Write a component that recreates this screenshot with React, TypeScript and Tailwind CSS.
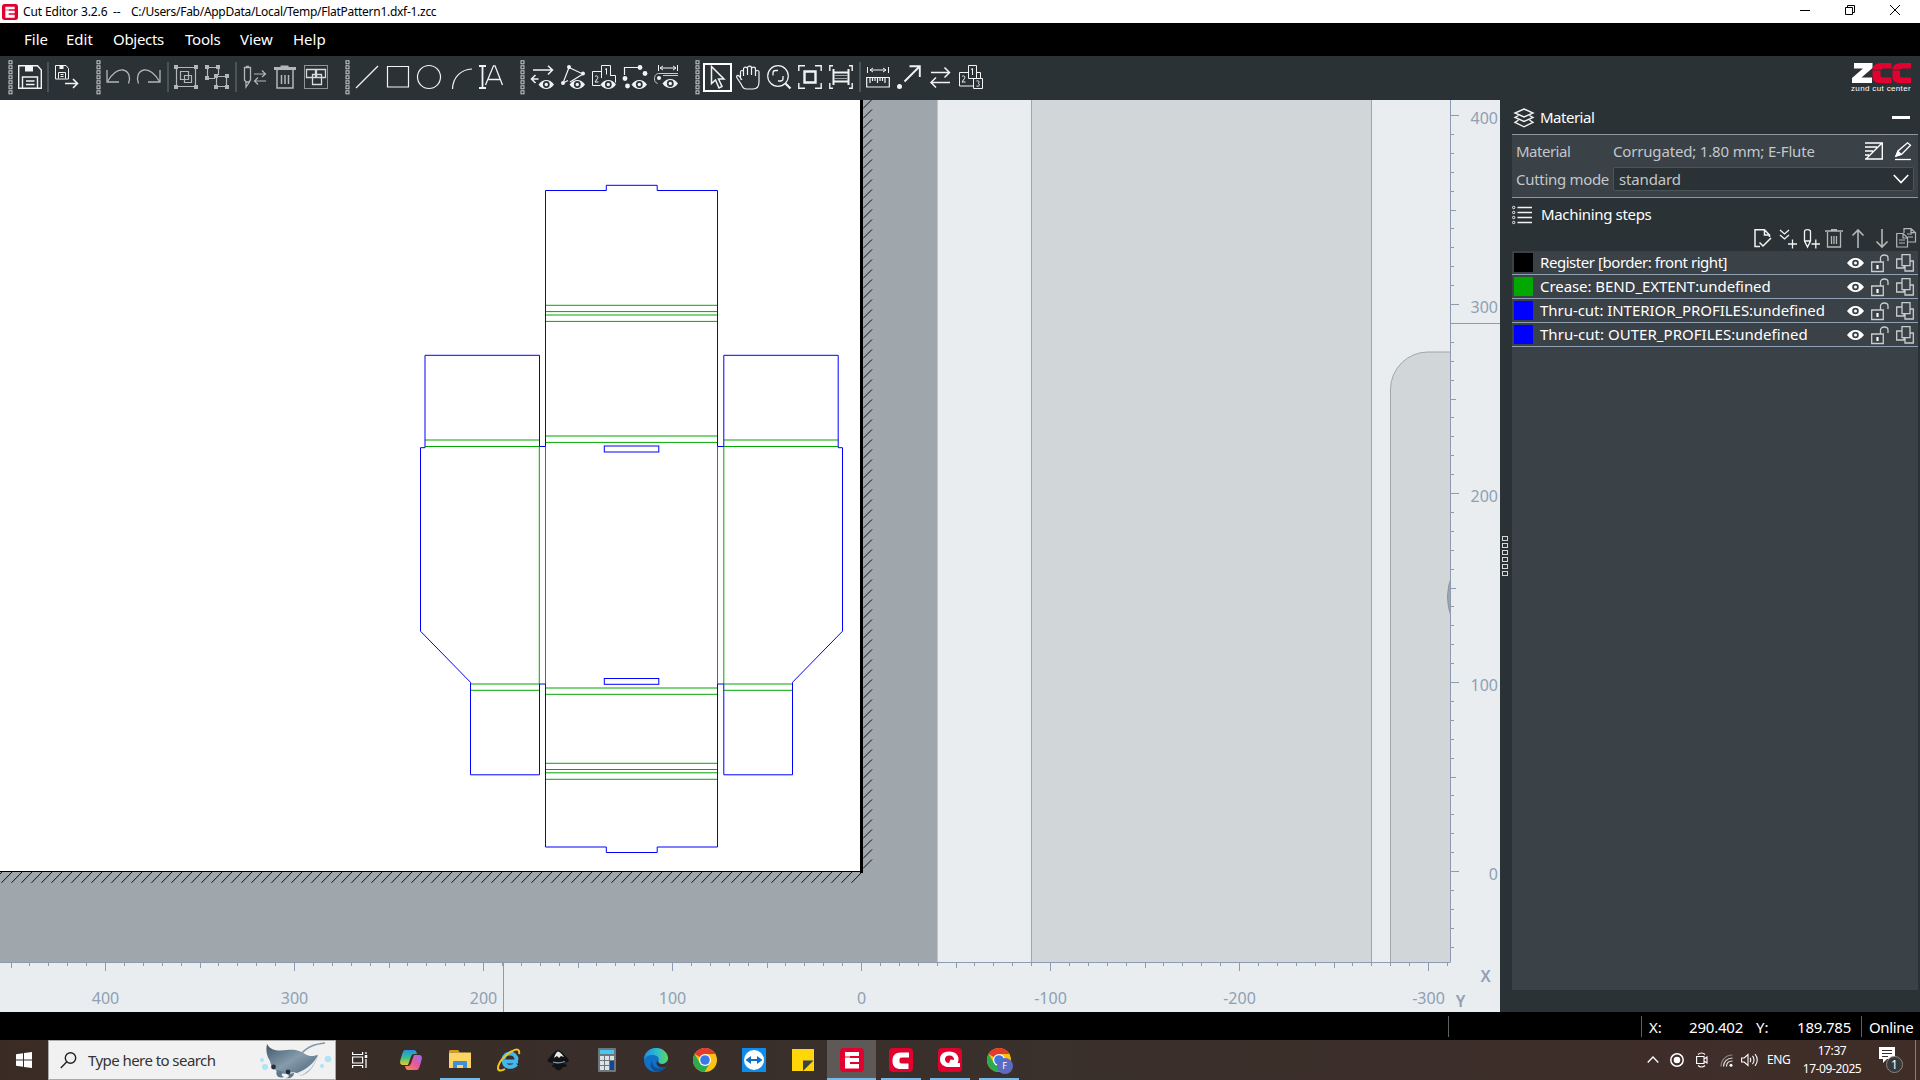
import type { ReactNode } from 'react'
import clsx from 'clsx'

const LIGHT = '#f2f4f4'
const DIM = '#b3b7b8'

type IconProps = {
  children: ReactNode
  size?: number
  color?: string
  sw?: number
}

function Icon({ children, size = 24, color = LIGHT, sw = 1 }: IconProps) {
  return (
    <svg
      width={size}
      height={size}
      viewBox={`0 0 ${size} ${size}`}
      fill="none"
      stroke={color}
      strokeWidth={sw}
      className="shrink-0 overflow-visible"
    >
      {children}
    </svg>
  )
}

function Tool({ children, active, dim, sw }: { children: ReactNode; active?: boolean; dim?: boolean; sw?: number }) {
  return (
    <button className="flex h-[29px] w-[31px] shrink-0 items-center justify-center">
      {active ? (
        <span className="flex h-[29px] w-[29px] items-center justify-center border-2 border-white">
          <Icon sw={sw}>{children}</Icon>
        </span>
      ) : (
        <Icon color={dim ? DIM : LIGHT} sw={sw}>{children}</Icon>
      )}
    </button>
  )
}

function Dots({ count }: { count: number }) {
  return (
    <svg width="5" height={count * 5} viewBox={`0 0 5 ${count * 5}`} fill="none" stroke="#c9cdce" className="shrink-0">
      {Array.from({ length: count }, (_, i) => (
        <rect key={i} x="1" y={i * 5 + 0.8} width="3" height="3" />
      ))}
    </svg>
  )
}

function Handle({ first, wide }: { first?: boolean; wide?: boolean }) {
  return (
    <span className={clsx('flex shrink-0 justify-end pr-[2px]', first ? 'w-[14.5px]' : wide ? 'w-[21px]' : 'w-[20px]')}>
      <Dots count={7} />
    </span>
  )
}

function Sep({ narrow }: { narrow?: boolean }) {
  return (
    <span className={clsx('flex shrink-0 justify-center', narrow ? 'w-[5px]' : 'w-[6px]')}>
      <span className="h-[30px] w-[2px] bg-[#4a5358]" />
    </span>
  )
}

// small eye shared by all the "show ..." buttons, 15x9
function Eye({ x, y }: { x: number; y: number }) {
  return (
    <g transform={`translate(${x} ${y})`} stroke="none">
      <path d="M0 4.5C2.5 1.2 5 0 7.8 0s5.300 1.200 7.700 4.500C13 8 10.500 9 7.800 9S2.500 8 0 4.500Z" fill={LIGHT} />
      <circle cx="7.8" cy="4.500" r="3.400" fill="#2b3235" />
      <circle cx="7.8" cy="4.500" r="1.700" fill={LIGHT} />
    </g>
  )
}

function Nodes({ pts, r = 2 }: { pts: number[][]; r?: number }) {
  return (
    <>
      {pts.map(([x, y]) => (
        <circle key={`${x}-${y}`} cx={x} cy={y} r={r} fill={LIGHT} stroke="none" />
      ))}
    </>
  )
}

function Corners({ pts }: { pts: number[][] }) {
  return (
    <>
      {pts.map(([x, y]) => (
        <rect key={`${x}-${y}`} x={x - 2} y={y - 2} width="4" height="4" fill={DIM} stroke="none" />
      ))}
    </>
  )
}

function TitleBar() {
  return (
    <header className="flex h-[23px] shrink-0 items-center bg-white pl-[2px] text-[12px] text-black">
      <AppLogo letter="E" size={16} />
      <span className="ml-[5px] w-[90px] whitespace-nowrap tracking-[-0.12px]">Cut Editor 3.2.6</span>
      <span className="w-[18px]">--</span>
      <span className="whitespace-nowrap tracking-[-0.28px]">C:/Users/Fab/AppData/Local/Temp/FlatPattern1.dxf-1.zcc</span>
      <div className="ml-auto flex items-center gap-[35px] pr-[20px] pb-[3px]">
        <svg width="10" height="10" stroke="#000"><path d="M0 5.500h10" /></svg>
        <svg width="10" height="10" stroke="#000" fill="none"><path d="M.5 2.500h7v7h-7zM2.500 2.500v-2h7v7h-2" /></svg>
        <svg width="10" height="10" stroke="#000"><path d="M0 0l10 10M10 0L0 10" /></svg>
      </div>
    </header>
  )
}

function MenuBar() {
  return (
    <nav className="flex h-[33px] shrink-0 items-center bg-black pl-[24px] text-[15px] text-white">
      <span className="w-[42px]">File</span>
      <span className="w-[47px]">Edit</span>
      <span className="w-[72px] tracking-[-0.3px]">Objects</span>
      <span className="w-[55px] tracking-[-0.2px]">Tools</span>
      <span className="w-[53px]">View</span>
      <span>Help</span>
    </nav>
  )
}

function ZccLogo() {
  return (
    <div className="flex w-[60px] flex-col items-center">
      <svg width="59" height="20" viewBox="0 0 59 20">
        <path d="M2 0h18.500v5L9.500 14.500H20V20H0v-5L11 5.500H2z" fill="#fff" />
        <path d="M39.500 0H29c-5 0-8.500 3-8.500 6v8c0 4 3 6 8 6h11v-5.500H31c-2 0-2.500-1-2.500-2V8c0-1.500 1-2.500 3-2.500h8zM59 0H49c-5 0-8.500 3-8.500 6v8c0 4 3 6 8 6H59v-5.500h-8.500c-2 0-2.500-1-2.500-2V8c0-1.500 1-2.500 3-2.500h8z" fill="#e4002f" />
        <path d="M20.500 7H39.500M40.500 7H59" stroke="#2b3235" strokeWidth="1" />
      </svg>
      <span className="mt-[1px] whitespace-nowrap font-['Liberation_Sans'] text-[8px] leading-[9px] tracking-[0.350px] text-white">zund cut center</span>
    </div>
  )
}

function Toolbar() {
  return (
    <div className="flex h-[44px] shrink-0 items-center bg-[#2b3235] pb-[2px]">
      <Handle first />
      <Tool>
        <path d="M.7.7H19.500l3.800 4.300V23.300H.7Z" strokeWidth="1.400" />
        <path d="M4.500 23V12h15v11" strokeWidth="1.400" />
        <path d="M8 16h8.500M8 19.500h8.500" strokeWidth="1.600" />
        <path d="M7 0h8v6.500H7z" fill={LIGHT} stroke="none" />
      </Tool>
      <Sep narrow />
      <Tool>
        <path d="M1.500.5h10.500l2.500 3v10.500h-13Z" />
        <path d="M4.500 13.500v-6h7v6M6.500 9.500h3M6.500 11.500h3" />
        <path d="M5.500 0h4v4h-4z" fill={LIGHT} stroke="none" />
        <path d="M11 18.500h12M19 14l4.500 4.500L19 23" strokeWidth="1.600" />
      </Tool>
      <Handle wide />
      <Tool dim>
        <path d="M1 5v12h12" strokeWidth="1.300" />
        <path d="M1.500 16.500C6 9 12 4.500 17 5c6 1 8 8 5.500 13.500" strokeWidth="1.300" />
      </Tool>
      <Tool dim>
        <path d="M23 5v12H11" strokeWidth="1.300" />
        <path d="M22.500 16.500C18 9 12 4.500 7 5 1 6-1 13 1.500 18.500" strokeWidth="1.300" />
      </Tool>
      <Sep />
      <Tool dim>
        <path d="M2.500 2.500h19v19h-19zM6.500 6.500h8v8h-8zM10.500 10.500h7v7h-7z" strokeWidth="1.200" />
        <Corners pts={[[2, 2], [22, 2], [2, 22], [22, 22]]} />
      </Tool>
      <Tool dim>
        <path d="M10 13.500H2.500v-11h11V10M11.500 11.500h10v10h-10z" strokeWidth="1.200" />
        <Corners pts={[[2, 2], [13, 2], [2, 13], [11, 11], [22, 11], [11, 22], [22, 22]]} />
      </Tool>
      <Sep />
      <Tool dim>
        <path d="M2.500 2.500h6v12.500l-1.500 2h-3l-1.500-2zM4 1.500h3M4 17v5l3.500-5" strokeWidth="1.300" />
        <path d="M12 9h11M20 5.500L23.500 9 20 12M24 16H13M16 12.500L12.500 16l3.500 3.500" strokeWidth="1.200" />
      </Tool>
      <Tool dim>
        <path d="M1 2h6.500V.5h8V2H23v3H1z" fill={DIM} stroke="none" />
        <path d="M4 5v18h16V5" strokeWidth="1.500" />
        <path d="M8.500 10v9M12 10v9M15.500 10v9" strokeWidth="1.500" />
      </Tool>
      <Tool>
        <rect x=".5" y=".5" width="23" height="23" strokeDasharray="1 1" />
        <path d="M2.500 4.500h9v8h-9zM12.500 4.500h9v8h-9zM8.500 9.500h9v10h-9z" stroke="#d8dbdb" strokeWidth="1.300" />
      </Tool>
      <Handle />
      <Tool>
        <path d="M1 23L23 1" strokeWidth="1.200" />
      </Tool>
      <Tool>
        <path d="M1.500 1.500h21v20.500h-21z" strokeWidth="1.200" />
      </Tool>
      <Tool>
        <circle cx="12" cy="12" r="11.500" strokeWidth="1.200" />
      </Tool>
      <Tool>
        <path d="M4.500 24C5 12 13 4.500 24 4" strokeWidth="1.200" />
      </Tool>
      <Tool>
        <path d="M0 1h7M0 23h7M3.500 1v22" strokeWidth="1.800" />
        <path d="M6.500 20L14.500.8h1.500L23.500 20M9.500 14.500h12" strokeWidth="1.300" />
      </Tool>
      <Handle />
      <Tool>
        <path d="M3 5h19M18 .8L22.500 5 18 9.500M8.500 14H2M5.500 10L1.500 14l4 4" strokeWidth="1.500" />
        <Eye x={8.500} y={15} />
      </Tool>
      <Tool>
        <path d="M8 2.500L22 9 9 17M8 2.500L2 18l5-2.500" strokeWidth="1.200" />
        <Nodes pts={[[8, 2], [22, 8.500], [2, 18]]} />
        <Eye x={8.500} y={15} />
      </Tool>
      <Tool>
        <path d="M9.500 13V.5h9V11M9 6.500H.5v14h8M19 10.500h4.500v7M14.500 9.500V3.500L13 4.500" />
        <path d="M3 11.500c2-1.500 3.500 0 2.500 2L3 17h3.500" />
        <Eye x={8.500} y={15} />
      </Tool>
      <Tool>
        <path d="M1.500 10V2.500H15" strokeWidth="1.200" />
        <Nodes pts={[[17, 2.500], [22, 8.500], [2, 13.500], [4.500, 21]]} r={2.400} />
        <Eye x={8.500} y={15} />
      </Tool>
      <Tool>
        <path d="M4.500 0v6M23.500 0v6M6 3h16M9 1L6 3l3 2M19 1l3 2-3 2" />
        <path d="M24 8.500H4.500C1 9 .5 12 .5 14c0 2 1 4 3 4.500M24 10.500H9" stroke="#c9cdce" />
        <Nodes pts={[[5, 13]]} />
        <Eye x={8.500} y={14} />
      </Tool>
      <Handle />
      <Tool active>
        <path d="M6.500 1.500v17l4-3.500 3.500 8 3-1.500-3.500-7.500H19z" strokeWidth="1.500" />
      </Tool>
      <Tool>
        <path d="M4.500 14.500V7c0-2 3-2 3 0v4V4c0-2.500 4-2.500 4 0v6-7c0-2.500 4-2.500 4 0v7-6c0-2.500 4-2.500 4 0v7-4c0-2 3.500-2 3.500 0v10c0 5-2 7-6 7H11c-3.500 0-4-1-6-5L.8 12.500c-.8-2 1.200-2.500 2.200-1.500l3 4" strokeWidth="1.200" />
      </Tool>
      <Tool>
        <circle cx="11" cy="11" r="10.300" strokeWidth="1.200" />
        <path d="M18.500 18.500l5 5" strokeWidth="2.200" />
        <path d="M6 10.500V8c0-1.500 1-2.500 2.500-2.500H11M16 11v2.500c0 1.500-1 2.500-2.500 2.500H11" strokeWidth="1.300" />
      </Tool>
      <Tool>
        <path d="M.8 6V.8H7M17 .8h6.200V6M.8 18v5.200H7M17 23.200h6.200V18" strokeWidth="1.400" />
        <path d="M6.500 6.500h11v11h-11z" strokeWidth="2.400" />
      </Tool>
      <Tool>
        <path d="M.8 6V.8H4M20 .8h3.200V6M.8 18v5.200H4M20 23.200h3.200V18" strokeWidth="1.400" />
        <path d="M4.500 4v16M19.500 4v16M4 7.500h16M4 16.500h16" strokeWidth="2" />
        <path d="M5 10.500h14M5 13.500h14" stroke="#9da2a4" />
      </Tool>
      <Sep />
      <Tool>
        <path d="M1.500 2v6M22.500 2v6M4 5h16M7 3L4 5l3 2M17 3l3 2-3 2" />
        <path d="M.7 12.500h22.600v9.500H.7zM4 13v5M6.500 13v3M9 13v3M11.500 13v5M14 13v3M16.500 13v3M19 13v5" strokeWidth="1.200" />
      </Tool>
      <Tool>
        <path d="M7.500 16.500L22.500 1.500M12.500 1.200h10.300V12" strokeWidth="1.900" />
        <Nodes pts={[[2.500, 21.500]]} r={2.500} />
      </Tool>
      <Tool>
        <path d="M3 7.500h18.500M16.500 2.500l5 5-5 5M22 17.500H3M8 12.500l-5 5 5 5" strokeWidth="1.500" />
      </Tool>
      <Tool>
        <path d="M9 7.500H.5v13.500h13.500M9.500 .5h8v13h-8zM18 7.500h3.500v6M14.500 13.500h9v10h-9z" />
        <path d="M12 4.500l1.500-1V10" />
        <path d="M3 11.500c2-1.500 3.500 0 2.500 2L3 17h3.500M17.500 16c2.500-1 3.500 1.500 1.500 2.500 2.500.5 1.500 3.500-1.500 2.500" />
      </Tool>
      <div className="mr-[9px] ml-auto pt-[2px]">
        <ZccLogo />
      </div>
    </div>
  )
}

const OUTLINE =
  'M545.5 446.5V190.500H606.300V185.300H657.200V190.500H717.500V446.500H723.800V355.300H838.200V447.700H842.500V631.200L792.500 682.300V774.800H723.800V684H717.500V847H657.200V852.500H606.300V847H545.500V684H539.500V774.800H470.500V682.300L420.500 631.200V447.700H425V355.300H539.500V446.500Z'

const CREASES: [number, number, number, number][] = [
  [545.5, 305.3, 717.5, 305.3],
  [545.5, 311.6, 717.5, 311.6],
  [545.5, 315, 717.5, 315],
  [545.5, 321.4, 717.5, 321.4],
  [545.5, 436, 717.5, 436],
  [545.5, 442.4, 717.5, 442.4],
  [425, 440, 539.5, 440],
  [425, 446.5, 539.5, 446.5],
  [723.8, 440, 838.2, 440],
  [723.8, 446.5, 838.2, 446.5],
  [539.3, 446.5, 539.3, 684],
  [545.5, 446.5, 545.5, 684],
  [717.5, 446.5, 717.5, 684],
  [723.8, 446.5, 723.8, 684],
  [470.5, 684, 539.5, 684],
  [470.5, 690.3, 539.5, 690.3],
  [723.8, 684, 792.5, 684],
  [723.8, 690.3, 792.5, 690.3],
  [545.5, 688, 717.5, 688],
  [545.5, 694.3, 717.5, 694.3],
  [545.5, 763.3, 717.5, 763.3],
  [545.5, 769.5, 717.5, 769.5],
  [545.5, 772.8, 717.5, 772.8],
  [545.5, 779.3, 717.5, 779.3],
]

function Viewport() {
  return (
    <svg width="1450" height="862" viewBox="0 100 1450 862" className="block">
      <rect y="100" width="1450" height="862" fill="#e9edf0" />
      <rect y="100" width="937" height="862" fill="#9fa6ac" />
      <path d="M937.5 100V962" stroke="#c0c5c9" />
      <rect x="1031" y="100" width="341" height="862" fill="#d1d6d9" />
      <path d="M1031.500 100V962M1371.500 100V962" stroke="#a0a6aa" />
      <path d="M1390.500 970V389A37.500 37.500 0 0 1 1428 352H1460V970Z" fill="#d1d6d9" stroke="#a0a6aa" />
      <circle cx="1502" cy="597" r="54.500" fill="#9fa6ac" stroke="#8a949c" />

      <rect y="100" width="860" height="771" fill="#fff" />
      <path d="M861.500 100V873" stroke="#000" strokeWidth="3" />
      <path d="M0 871.500H863" stroke="#000" />
      <g stroke="#000" strokeWidth="0.900">
        {Array.from({ length: 79 }, (_, i) => 108.500 + i * 10).filter((y) => y < 872).map((y) => (
          <path key={y} d={`M863 ${y}l9 -9`} />
        ))}
        {Array.from({ length: 87 }, (_, i) => 2 + i * 10).map((x) => (
          <path key={x} d={`M${x} 872l-10.500 10.800`} />
        ))}
      </g>

      <g stroke="#00a800" strokeWidth="1">
        {CREASES.map(([x1, y1, x2, y2], i) => (
          <line key={i} x1={x1} y1={y1} x2={x2} y2={y2} />
        ))}
      </g>
      <g fill="none" stroke="#0000ff">
        <path d={OUTLINE} />
        <rect x="604.300" y="446" width="54.500" height="6" />
        <rect x="604.300" y="678.500" width="54.500" height="5.800" />
      </g>
    </svg>
  )
}

const tickSize = (i: number) => (i % 10 === 0 ? 8 : i % 5 === 0 ? 5 : 3)

function BottomRuler() {
  const ticks = Array.from({ length: 78 }, (_, i) => i - 31)
  return (
    <svg width="1500" height="50" viewBox="0 962 1500 50" className="block bg-[#e9edf0] text-[16px]">
      <g stroke="#8c9bb0">
        <path d="M0 962.500H1450.500" />
        {ticks.map((i) => {
          const x = Math.round(861 - i * 18.900) + 0.500
          return x < 1450 ? <path key={i} d={`M${x} 963v${tickSize(i)}`} /> : null
        })}
        <path d="M503.500 962V1012" />
      </g>
      <g fill="#8fa0b3" textAnchor="middle">
        {[400, 300, 200, 100, 0, -100, -200, -300].map((v) => (
          <text key={v} x={861.500 - v * 1.890} y="1004">{v}</text>
        ))}
        <text x="1485.500" y="982" fontWeight="600" fontSize="16">X</text>
        <text x="1460.500" y="1007" fontWeight="600" fontSize="16">Y</text>
      </g>
    </svg>
  )
}

function SideRuler() {
  const ticks = Array.from({ length: 46 }, (_, i) => i - 4)
  return (
    <svg width="50" height="862" viewBox="1450 100 50 862" className="block bg-[#e9edf0] text-[16px]">
      <g stroke="#8c9bb0">
        <path d="M1450.500 100V962" />
        {ticks.map((i) => {
          const y = Math.round(871 - i * 18.900) + 0.500
          return <path key={i} d={`M1451 ${y}h${tickSize(i)}`} />
        })}
        <path d="M1450 323.500H1500" />
      </g>
      <g fill="#8fa0b3" textAnchor="end">
        {[400, 300, 200, 100, 0].map((v) => (
          <text key={v} x="1498" y={880 - v * 1.890}>{v}</text>
        ))}
      </g>
    </svg>
  )
}

const STEPS = [
  { swatch: 'bg-black', label: 'Register [border: front right]', spacing: 'tracking-[-0.45px]' },
  { swatch: 'bg-[#00a800]', label: 'Crease: BEND_EXTENT:undefined', spacing: 'tracking-[-0.07px]' },
  { swatch: 'bg-[#0000ff]', label: 'Thru-cut: INTERIOR_PROFILES:undefined', spacing: 'tracking-[-0.05px]' },
  { swatch: 'bg-[#0000ff]', label: 'Thru-cut: OUTER_PROFILES:undefined', spacing: 'tracking-[0.03px]' },
]

function StepRow({ swatch, label, spacing }: { swatch: string; label: string; spacing: string }) {
  return (
    <div className="flex h-[24px] items-center border-b border-[#8fa0b3] bg-[#3a4147] pr-[4px] pl-[2px]">
      <span className={clsx('h-[19px] w-[19px] shrink-0', swatch)} />
      <span className={clsx('ml-[7px] grow whitespace-nowrap text-[15px] text-white', spacing)}>{label}</span>
      <svg width="17" height="10" viewBox="0 0 17 10" className="mr-[7px] shrink-0">
        <path d="M0 5C3 1 6 0 8.500 0S14 1 17 5c-3 4-6 5-8.500 5S3 9 0 5Z" fill="#fff" />
        <circle cx="8.500" cy="5" r="3.300" fill="#3a4147" />
        <circle cx="8.500" cy="5" r="1.500" fill="#fff" />
      </svg>
      <Icon size={18} color="#c9cdce" sw={1.300}>
        <path d="M.7 8h11.600v9.500H.7zM9.500 8V4c0-4 7.500-4 7.500 0v3" />
        <path d="M6.500 11v4" strokeWidth="2.200" stroke="#fff" />
      </Icon>
      <span className="w-[7px] shrink-0" />
      <Icon size={18} color="#c9cdce" sw={1.300}>
        <path d="M6 .7h8v11H6zM6 5H.7v9H8V12M14 7h3.300v10H9v-5" />
      </Icon>
    </div>
  )
}

function SidePanel() {
  return (
    <aside className="flex w-[420px] bg-[#2b3235] text-[15px]">
      <div className="flex w-[12px] flex-col items-start gap-[2px] pt-[436px] pl-[2px]">
        {[0, 1, 2, 3, 4, 5].map((i) => (
          <span key={i} className="h-[5px] w-[6px] border border-[#d5d8d9]" />
        ))}
      </div>
      <div className="flex w-[406px] flex-col">
        <div className="flex h-[35px] items-center border-b border-[#8d979c] pt-px pl-[2px] text-white">
          <Icon size={20} sw={1.400}>
            <path d="M10 1l9 4-9 4-9-4zM4.500 7.500L1 9.500l9 4 9-4-3.500-2M4.500 12L1 14.500l9 4.300 9-4.300-3.500-2.500" />
          </Icon>
          <span className="ml-[6px] tracking-[-0.5px]">Material</span>
          <span className="mr-[8px] ml-auto h-[3px] w-[18px] bg-white" />
        </div>
        <div className="h-[63px] border-b border-[#8d979c] bg-[#3a4147] pt-[2px] pl-[4px] text-[#c3c8cb]">
          <div className="flex h-[28px] items-center">
            <span className="w-[97px] tracking-[-0.5px]">Material</span>
            <span className="grow whitespace-nowrap tracking-[-0.17px]">Corrugated; 1.80 mm; E-Flute</span>
            <Icon size={18} color="#fff" sw={1.400}>
              <path d="M0 1h17.300v16H0M17 1L1 17M0 5h12M0 9h8M0 13h4" />
            </Icon>
            <span className="w-[11px]" />
            <Icon size={18} color="#fff" sw={1.300}>
              <path d="M2 14l2-5L13.500.800l3 2.500L7.500 12.500z" />
              <path d="M2 14l2-4.500 3 2.500z" fill="#fff" />
              <path d="M1 17.500h16" />
            </Icon>
            <span className="w-[6px]" />
          </div>
          <div className="mt-px flex h-[26px] items-center">
            <span className="w-[97px] whitespace-nowrap tracking-[-0.3px]">Cutting mode</span>
            <div className="flex h-[24px] w-[301px] items-center justify-between rounded-[2px] border border-[#4b5459] bg-[#2b3235] pr-[4px] pl-[5px]">
              <span className="tracking-[-0.15px]">standard</span>
              <svg width="16" height="10" fill="none" stroke="#fff" strokeWidth="1.600"><path d="M.8 1l7.200 7.500L15.200 1" /></svg>
            </div>
          </div>
        </div>
        <div className="flex h-[33px] items-center text-white">
          <Icon size={20} sw={1.400}>
            <path d="M5.500 2.500H20M5.500 7.500H20M5.500 12.500H20M5.500 17.500H20" />
            {[2.500, 7.500, 12.500, 17.500].map((y) => (
              <circle key={y} cx="1.700" cy={y} r="1.200" strokeWidth="1" />
            ))}
          </Icon>
          <span className="ml-[9px] tracking-[-0.33px]">Machining steps</span>
        </div>
        <div className="flex h-[20px] items-center justify-end gap-[5px] pr-[2px] pb-[6px]">
          <Icon size={18} sw={1.500}>
            <path d="M6 17.500H1V.7h9.500L15.500 6v2M10.500.7V6h5M5.500 13.500l3.500 3.500 8-8" />
          </Icon>
          <span className="ml-[-3px]" />
          <Icon size={18} sw={1.300}>
            <path d="M1 1l4.500 4L10 1M1 6l4.500 4L10 6M9 15h9M13.500 10.500v9" />
          </Icon>
          <Icon size={18} sw={1.300}>
            <path d="M2.500 2.500c0-2.500 6-2.500 6 0v9.500l-3 6-3-6zM2.500 12h6M9.500 15h8.500M13.800 10.500v9" />
          </Icon>
          <Icon size={18} color={DIM} sw={1.300}>
            <path d="M0 2h18M6 .7h6M2.500 3v15h13V3M6.500 7v8M9 7v8M11.500 7v8" />
          </Icon>
          <span className="ml-[-4px]" />
          <Icon size={18} color={DIM} sw={1.600}>
            <path d="M9 19V1M3.500 6.500L9 1l5.500 5.500" />
          </Icon>
          <span className="ml-[-4px]" />
          <Icon size={18} color={DIM} sw={1.600}>
            <path d="M9 0v18M3.500 12.500L9 18l5.500-5.500" />
          </Icon>
          <span className="ml-[-5px]" />
          <Icon size={20} color={DIM} sw={1.200}>
            <path d="M8 5V.7h7l4.500 4V14H12M15 .7v4h4M11 6h5M12 9h5M.7 5.500H7l4.500 4v9.500H.7zM7 5.500v4.500h4M3 12h6M3 15h6" />
          </Icon>
        </div>
        {STEPS.map((s) => (
          <StepRow key={s.label} {...s} />
        ))}
        <div className="h-[643px] bg-[#3a4147]" />
      </div>
    </aside>
  )
}

function StatusBar() {
  return (
    <div className="flex h-[28px] shrink-0 items-center justify-end bg-black text-[15px] text-white">
      <span className="mr-[192px] h-[21px] w-px bg-[#5a6266]" />
      <span className="h-[21px] w-px bg-[#5a6266]" />
      <span className="ml-[7px] w-[40px] pt-[3px]">X:</span>
      <span className="w-[67px] pt-[3px] tracking-[-0.200px]">290.402</span>
      <span className="w-[41px] pt-[3px]">Y:</span>
      <span className="w-[64px] pt-[3px] tracking-[-0.200px]">189.785</span>
      <span className="h-[21px] w-px bg-[#5a6266]" />
      <span className="w-[58px] pt-[3px] pl-[7px] tracking-[-0.350px]">Online</span>
    </div>
  )
}

function AppLogo({ letter, size = 24 }: { letter: 'E' | 'C' | 'Q'; size?: number }) {
  return (
    <svg width={size} height={size} viewBox="0 0 24 24">
      <rect width="24" height="24" rx="4" fill="#e2002e" />
      {letter === 'E' && <path d="M5 4h14v4H10v2h9v4h-9v2h9v4.500H5z" fill="#fff" />}
      {letter === 'C' && (
        <path d="M20 4.500v5h-7c-2.500 0-2.500 1-2.500 3s0 3 2.500 3h6.500V21H12c-5.500 0-8.500-2.500-8.500-8S6 4.500 12 4.500z" fill="#fff" />
      )}
      {letter === 'Q' && (
        <path fillRule="evenodd" d="M11 3.500c6 0 9.500 3 9.500 7.500 0 1.700-.3 3-1 4H22v4H11c-5.500 0-9-3-9-7.800S5.500 3.500 11 3.500zM11.500 7.500C8.500 7.500 7 9.200 7 11.300c0 2.200 1.500 3.700 4 3.700l1.500-3.500 3.500.500c0-3-1.500-4.500-4.500-4.500z" fill="#fff" />
      )}
      {letter === 'E' && <path d="M5 9h5" stroke="#e2002e" strokeWidth="1" />}
    </svg>
  )
}

function Chrome() {
  return (
    <svg width="24" height="24" viewBox="0 0 24 24">
      <circle cx="12" cy="12" r="12" fill="#fbc116" />
      <path d="M12 12L1.600 6A12 12 0 0 1 22.400 6H12z" fill="#e33b2e" />
      <path d="M1.600 6A12 12 0 0 0 11.500 24L17 15l-10 0z" fill="#2da94f" />
      <circle cx="12" cy="12" r="6" fill="#fff" />
      <circle cx="12" cy="12" r="4.800" fill="#3b78e7" />
    </svg>
  )
}

function Manta() {
  return (
    <svg width="74" height="38" viewBox="0 0 74 38">
      <defs>
        <linearGradient id="manta" x1="0" y1="0" x2="1" y2="1">
          <stop offset="0" stopColor="#3f5668" />
          <stop offset=".5" stopColor="#869cac" />
          <stop offset="1" stopColor="#465d70" />
        </linearGradient>
      </defs>
      <path d="M42 13C50 4 58 3 66 2" stroke="#8496a3" strokeWidth="1.600" fill="none" />
      <path d="M8 3c4 7 11 7 20 6 9-1 13 1 18 4 5 3 8 2 13 1-2 8-7 17-17 21-4-5-12-4-16-2C18 32 12 27 11 20 7 14 7 8 8 3Z" fill="url(#manta)" />
      <path d="M18 29c-2 5 1 9 7 7-3-1-3-4 0-5M29 33c2 3 0 4-3 4 5 1 9-1 9-5" fill="#5f788b" />
      <path d="M42 35C50 31 57 23 59 14c-4 8-11 14-21 18z" fill="#e7edf1" />
      <circle cx="14.500" cy="26" r="2.400" fill="#22303d" />
      <circle cx="29" cy="31" r="2.400" fill="#22303d" />
      <g fill="#aee4f7">
        <circle cx="3" cy="19" r="2" />
        <circle cx="6" cy="26" r="3" />
        <circle cx="69" cy="18" r="3.300" />
        <circle cx="63" cy="25" r="2" />
      </g>
    </svg>
  )
}

function Task({ children, active, running }: { children: ReactNode; active?: boolean; running?: boolean }) {
  return (
    <div className={clsx('flex h-[40px] w-[49px] shrink-0 flex-col items-center', active && 'bg-[#5e5856]')}>
      <span className="flex h-[38px] items-center pt-[1px]">{children}</span>
      {(running || active) && <span className={clsx('h-[2px] bg-[#76b9ed]', active ? 'w-[49px]' : 'w-[40px]')} />}
    </div>
  )
}

function Taskbar() {
  return (
    <footer className="flex h-[40px] shrink-0 items-center bg-linear-to-r from-[#3a2b25] via-[#39302c] to-[#402d28] text-white">
      <div className="flex w-[48px] justify-center">
        <svg width="16" height="16" fill="#fff">
          <path d="M0 2.300L7 1.300V7.500H0zM8 1.100L16 0v7.500H8zM0 8.500h7v6.200l-7-1zM8 8.500h8V16l-8-1.100z" />
        </svg>
      </div>
      <div className="flex h-[40px] w-[288px] items-center border border-[#a9a9a9] bg-[#f1f1f1] pl-[11px] text-[#333]">
        <svg width="17" height="17" fill="none" stroke="#222" strokeWidth="1.400">
          <circle cx="10.500" cy="6" r="5.200" />
          <path d="M6.800 9.800L.8 16" />
        </svg>
        <span className="ml-[11px] w-[171px] whitespace-nowrap text-[15px] tracking-[-0.560px]">Type here to search</span>
        <Manta />
      </div>
      <div className="flex w-[50px] items-center justify-center pr-[2px]">
        <svg width="16" height="16" fill="none" stroke="#fff" strokeWidth="1.200">
          <path d="M.6 0v2.500h10V0M.6 5h10v6H.6zM.6 16v-2.500h10V16M14 0v2M14 7v9" />
          <path d="M14 3v3" strokeWidth="2.500" />
        </svg>
      </div>
      <Task>
        <svg width="24" height="22" viewBox="0 0 24 22">
          <defs>
            <linearGradient id="cp1" x1="0" y1="0" x2="0" y2="1">
              <stop offset="0" stopColor="#2a8de8" />
              <stop offset=".5" stopColor="#35c08a" />
              <stop offset="1" stopColor="#f2c530" />
            </linearGradient>
            <linearGradient id="cp2" x1="1" y1="0" x2="0" y2="1">
              <stop offset="0" stopColor="#9a6bf0" />
              <stop offset=".5" stopColor="#e8589a" />
              <stop offset="1" stopColor="#f7904a" />
            </linearGradient>
          </defs>
          <path d="M6 1h9c2 0 2.500 2 3 4h-3c-2 0-3 2-3.500 4L9 16H4c-4 0-3-4-2-7s2-8 4-8Z" fill="url(#cp1)" />
          <path d="M18 21H9c-2 0-2.500-2-3-4h3c2 0 3-2 3.500-4L15 6h5c4 0 3 4 2 7s-2 8-4 8Z" fill="url(#cp2)" />
        </svg>
      </Task>
      <Task running>
        <svg width="22" height="19" viewBox="0 0 22 19">
          <path d="M0 1.500C0 .5.500 0 1.500 0H9l2 2.500H0z" fill="#e09a12" />
          <path d="M0 2.500h22V18H0z" fill="#fcd462" />
          <path d="M4 18v-5.500c0-1 .5-1.500 1.500-1.500h11c1 0 1.500.5 1.500 1.500V18h-4v-3H8v3z" fill="#3c8fd8" />
        </svg>
      </Task>
      <Task>
        <svg width="24" height="24" viewBox="0 0 24 24" fill="none">
          <path d="M21 13.500H7c0 6 8 7 12.500 2.500" stroke="#43b8ee" strokeWidth="4" />
          <path d="M6.500 11.500C7 3.500 19.500 3.500 19.500 12" stroke="#43b8ee" strokeWidth="4" />
          <path d="M22 6c1-4-1.500-6-6.500-3C8 6.500 1 15 1 20c0 3 3 3.500 7 1" stroke="#f4c51d" strokeWidth="2" />
        </svg>
      </Task>
      <Task>
        <svg width="22" height="22" viewBox="0 0 22 22">
          <path d="M11 1c2 0 9 7 10.500 9.500s-2 3-4.500 3.500c1 2 4 1.500 3 3s-4 0-5 2-2.500 3-5 2-1-2.500-4-3 0-2 1-3-6-1-6.500-3S9 1 11 1Z" fill="#101215" />
          <path d="M11 2.500c2 0 5 4 6 5.500l-3-1-2 2-2-2-3 2C7.500 7 9.500 2.500 11 2.500Z" fill="#e5e8ea" />
          <path d="M6 13c3 1 8 1 12-.5" stroke="#8f9aa6" strokeWidth="1.200" fill="none" />
        </svg>
      </Task>
      <Task>
        <svg width="18" height="24" viewBox="0 0 18 24">
          <rect width="18" height="24" rx="1" fill="#70777c" />
          <rect x="2" y="2" width="14" height="4" fill="#45c8f5" />
          <g fill="#dfe2e4">
            <path d="M2 8h4v4H2zM7 8h4v4H7zM12 8h4v4h-4zM2 13h4v4H2zM7 13h4v4H7zM2 18h4v4H2zM7 18h4v4H7z" />
          </g>
          <path d="M12 13h4v9h-4z" fill="#0d4a94" />
        </svg>
      </Task>
      <Task>
        <svg width="24" height="24" viewBox="0 0 24 24">
          <defs>
            <linearGradient id="edge" x1="0" y1=".3" x2="1" y2=".3">
              <stop offset="0" stopColor="#1e90dc" />
              <stop offset=".5" stopColor="#2bb8d8" />
              <stop offset="1" stopColor="#5fd85c" />
            </linearGradient>
          </defs>
          <circle cx="12" cy="12" r="12" fill="#1271c5" />
          <path d="M0 12C0 5 5 0 12 0c7 0 12 5 12 10 0 4-3 6-6 6s-5-1-3.500-3C16 9 12 7 9 7 4 7 1 9 0 12Z" fill="url(#edge)" />
          <path d="M8 13c0 6 5 9 13 6.500C18 24 12 25 9 22s-3-6-1-9Z" fill="#0c4e97" />
          <path d="M24 12c0 3-1 5-2.500 7-5 1.500-9-.5-9-4 0-1 .5-2 1.500-2.500 0 2 1.500 3.500 4 3.500 3 0 5-2 6-4Z" fill="#332d2d" />
        </svg>
      </Task>
      <Task>
        <Chrome />
      </Task>
      <Task>
        <svg width="24" height="24" viewBox="0 0 24 24">
          <rect width="24" height="24" fill="#0d8cec" />
          <circle cx="12" cy="12" r="10" fill="#fff" />
          <path d="M3.500 12L9 8v3h6V8l5.500 4L15 16v-3H9v3z" fill="#0d6fc8" />
        </svg>
      </Task>
      <Task>
        <svg width="22" height="22" viewBox="0 0 22 22">
          <path d="M0 0h22v22H0z" fill="#ffd60a" />
          <path d="M11 11.500h10.500L11 22z" fill="#3f4144" />
        </svg>
      </Task>
      <Task active>
        <AppLogo letter="E" />
      </Task>
      <Task running>
        <AppLogo letter="C" />
      </Task>
      <Task running>
        <AppLogo letter="Q" />
      </Task>
      <Task running>
        <span className="relative block">
          <Chrome />
          <span className="absolute top-[10px] left-[10px] flex h-[16px] w-[16px] items-center justify-center rounded-full bg-[#5c6bc0] text-[9px]">F</span>
        </span>
      </Task>

      <div className="ml-auto flex h-[40px] items-center">
        <svg width="12" height="8" fill="none" stroke="#fff" strokeWidth="1.300"><path d="M.7 6.500L6 1l5.300 5.500" /></svg>
        <svg width="14" height="14" className="ml-[11px]" fill="none" stroke="#fff" strokeWidth="1.500">
          <circle cx="7" cy="7" r="6.200" />
          <circle cx="7" cy="7" r="3.300" fill="#fff" stroke="none" />
        </svg>
        <svg width="12" height="16" className="ml-[12px]" fill="none" stroke="#fff" strokeWidth="1.100">
          <path d="M.6 4.500h7.400v7H.6zM8 7l3-2v6L8 9M2 2.500C4 .5 7 .5 9 2.500M2 13.500c2 2 5 2 7 0" />
        </svg>
        <svg width="13" height="13" className="ml-[12px]" fill="none" strokeWidth="1.200">
          <path d="M1 12.500C1 6 6 1 12.500 1" stroke="#8d8480" />
          <path d="M3.500 12.500c0-5 4-8.500 9-8.500M6.500 12.500c0-3.500 2.500-5.500 6-5.500" stroke="#e8e6e5" />
          <circle cx="11" cy="11.300" r="1.500" fill="#fff" />
        </svg>
        <svg width="17" height="14" className="ml-[8px]" fill="none" stroke="#fff" strokeWidth="1.100">
          <path d="M.6 5h2.600L7 1.500v11L3.200 9H.6zM9 5c1 1 1 3 0 4M11.500 3c2 2 2 6 0 8M14 1.200c3 3.300 3 8.300 0 11.600" />
        </svg>
        <span className="ml-[9px] w-[32px] text-[12px] tracking-[-0.400px]">ENG</span>
        <div className="flex w-[66px] flex-col items-center text-[12px] leading-[18px] tracking-[-0.400px]">
          <span>17:37</span>
          <span className="whitespace-nowrap">17-09-2025</span>
        </div>
        <svg width="26" height="26" viewBox="0 0 26 26" className="ml-[14px]">
          <path d="M0 0h16v12H8l-4 4v-4H0z" fill="#fff" />
          <path d="M3 3.500h10M3 6.500h10M3 9.500h6" stroke="#402d28" />
          <circle cx="15.500" cy="17.500" r="8" fill="#3a3838" stroke="#8c8784" />
          <text x="15.500" y="22" fontSize="12" textAnchor="middle" fill="#fff">1</text>
        </svg>
        <span className="ml-[10px] h-[40px] w-px bg-[#8c7f7a]" />
        <span className="w-[4px]" />
      </div>
    </footer>
  )
}

export default function App() {
  return (
    <div className="flex h-[1080px] w-[1920px] flex-col overflow-hidden font-['Noto_Sans',sans-serif]">
      <TitleBar />
      <MenuBar />
      <Toolbar />
      <main className="flex h-[912px] shrink-0">
        <div className="flex w-[1500px] flex-col">
          <div className="flex">
            <Viewport />
            <SideRuler />
          </div>
          <BottomRuler />
        </div>
        <SidePanel />
      </main>
      <StatusBar />
      <Taskbar />
    </div>
  )
}
